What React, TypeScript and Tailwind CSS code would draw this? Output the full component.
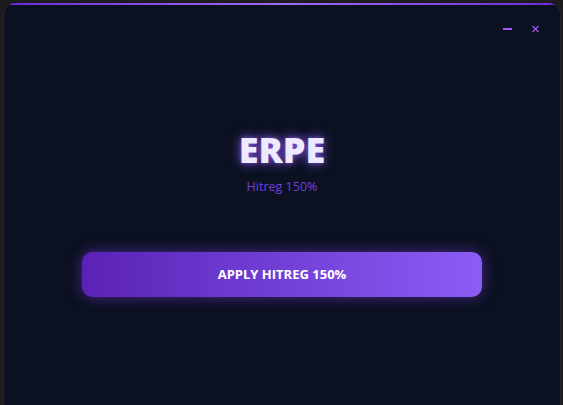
import { X } from 'lucide-react';

export default function App() {
  return (
    <div className="h-screen w-full overflow-hidden bg-[#1c1c1f] pl-[3px] pr-[2px] pt-[3px]">
      <div className="relative flex h-full flex-col overflow-hidden rounded-t-[12px] border-x border-[#23262e] bg-[#0b1120] font-['Open_Sans',sans-serif]">
        {/* top accent */}
        <div className="h-[2px] w-full bg-gradient-to-r from-[#6d28d9] via-[#9d6cf5] to-[#6d28d9]" />

        {/* window controls */}
        <div className="flex items-center justify-end gap-[18px] pr-[19px] pt-[17px]">
          <button className="flex h-[14px] w-[10px] items-center justify-center">
            <span className="block h-[2px] w-[9px] bg-[#a855f7]" />
          </button>
          <button className="flex h-[14px] w-[11px] items-center justify-center text-[#a855f7]">
            <X className="h-[12px] w-[12px]" strokeWidth={2.4} />
          </button>
        </div>

        <div className="flex flex-col items-center pt-[94px]">
          <h1 className="text-[36px] font-extrabold leading-[40px] tracking-[0px] text-[#ede9fe] [text-shadow:0_0_12px_rgba(139,92,246,0.9),0_0_4px_rgba(139,92,246,0.6)]">
            ERPE
          </h1>
          <p className="mt-[9px] text-[12.5px] leading-[16px] text-[#6f3fe0]">Hitreg 150%</p>

          <button className="mt-[57px] flex h-[45px] w-[400px] items-center justify-center rounded-[10px] bg-gradient-to-r from-[#5b21b6] to-[#8b5cf6] text-[13px] font-bold text-white shadow-[0_0_14px_rgba(124,58,237,0.55)]">
            APPLY HITREG 150%
          </button>
        </div>
      </div>
    </div>
  );
}
